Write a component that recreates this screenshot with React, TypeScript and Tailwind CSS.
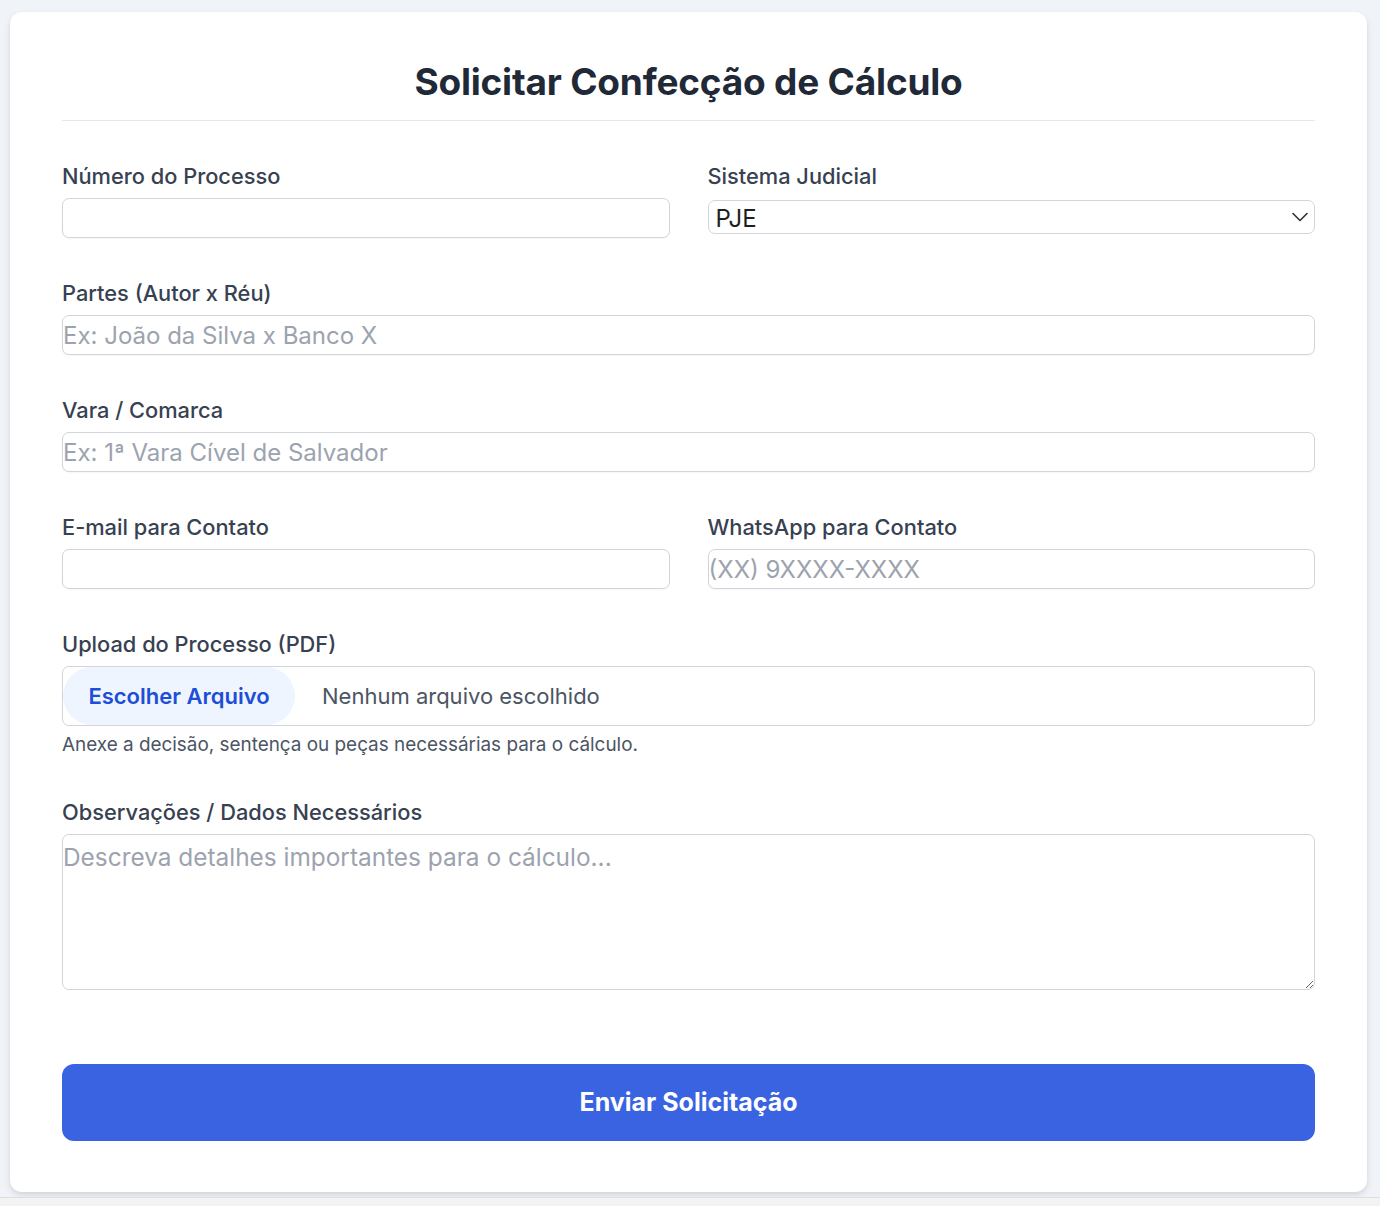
import React from "react";

function Label({ children }: { children: React.ReactNode }) {
  return (
    <label className="block text-[21.8px] leading-[28px] font-medium text-[#374151] mb-[8px]">
      {children}
    </label>
  );
}

const inputCls =
  "block w-full h-[40px] rounded-[7px] border border-[#d1d5db] bg-white px-[0px] text-[24px] text-[#111827] placeholder:text-[#9ca3af] outline-none shadow-[0_1px_2px_rgba(0,0,0,0.04)]";

export default function App() {
  return (
    <div className="w-[1380px] font-['Inter',sans-serif]">
      <div className="bg-[#f0f4f9] h-[1197px] pt-[12px] pl-[10px]">
        <div className="w-[1357px] h-[1180px] bg-white rounded-[12px] shadow-[0_4px_8px_rgba(0,0,0,0.08),0_2px_4px_rgba(0,0,0,0.06)] px-[52px] pt-[50px]">
          <div className="border-b border-[#e5e7eb] pb-[18px]">
            <h1 className="text-center text-[37px] leading-[40px] font-bold text-[#1f2937] tracking-[-0.2px]">
              Solicitar Confecção de Cálculo
            </h1>
          </div>

          <div className="pt-[41px] flex flex-col gap-[41px]">
            <div className="grid grid-cols-2 gap-[38px]">
              <div>
                <Label>Número do Processo</Label>
                <input className={inputCls} />
              </div>
              <div>
                <Label>Sistema Judicial</Label>
                <div className="relative pt-[2px]">
                  <select className="block w-full h-[34px] appearance-none rounded-[7px] border border-[#d1d5db] bg-white pl-[7px] text-[24px] text-[#1f1f1f] outline-none">
                    <option>PJE</option>
                  </select>
                  <svg
                    className="absolute right-[6px] top-[12px] pointer-events-none"
                    width="18"
                    height="14"
                    viewBox="0 0 18 14"
                    fill="none"
                  >
                    <path d="M2 3.5 L9 10.5 L16 3.5" stroke="#333" strokeWidth="1.6" strokeLinecap="round" strokeLinejoin="round" />
                  </svg>
                </div>
              </div>
            </div>

            <div>
              <Label>Partes (Autor x Réu)</Label>
              <input className={inputCls} placeholder="Ex: João da Silva x Banco X" />
            </div>

            <div>
              <Label>Vara / Comarca</Label>
              <input className={inputCls} placeholder="Ex: 1ª Vara Cível de Salvador" />
            </div>

            <div className="grid grid-cols-2 gap-[38px]">
              <div>
                <Label>E-mail para Contato</Label>
                <input className={inputCls} />
              </div>
              <div>
                <Label>WhatsApp para Contato</Label>
                <input className={inputCls} placeholder="(XX) 9XXXX-XXXX" />
              </div>
            </div>

            <div>
              <Label>Upload do Processo (PDF)</Label>
              <div className="flex items-center h-[60px] rounded-[7px] border border-[#d1d5db] bg-white">
                <div className="flex items-center justify-center h-[58px] w-[232px] rounded-full bg-[#eff5fe] text-[22px] font-semibold text-[#1d4ed8]">
                  Escolher Arquivo
                </div>
                <span className="ml-[27px] text-[22px] text-[#4b5563]">Nenhum arquivo escolhido</span>
              </div>
              <p className="mt-[7px] text-[18.9px] leading-[24px] text-[#4b5563]">
                Anexe a decisão, sentença ou peças necessárias para o cálculo.
              </p>
            </div>

            <div>
              <Label>Observações / Dados Necessários</Label>
              <textarea
                className="block w-full h-[156px] rounded-[7px] border border-[#d1d5db] bg-white px-[0px] pt-[6px] text-[24.4px] leading-[32px] text-[#111827] placeholder:text-[#9ca3af] outline-none"
                placeholder="Descreva detalhes importantes para o cálculo..."
              />
            </div>
          </div>

          <button className="mt-[74px] w-full h-[77px] rounded-[12px] bg-[#3a63e2] text-white text-[25px] font-bold">
            Enviar Solicitação
          </button>
        </div>
      </div>
      <div className="h-[9px] bg-[#f3f3f3] border-t border-[#dedede]" />
    </div>
  );
}
